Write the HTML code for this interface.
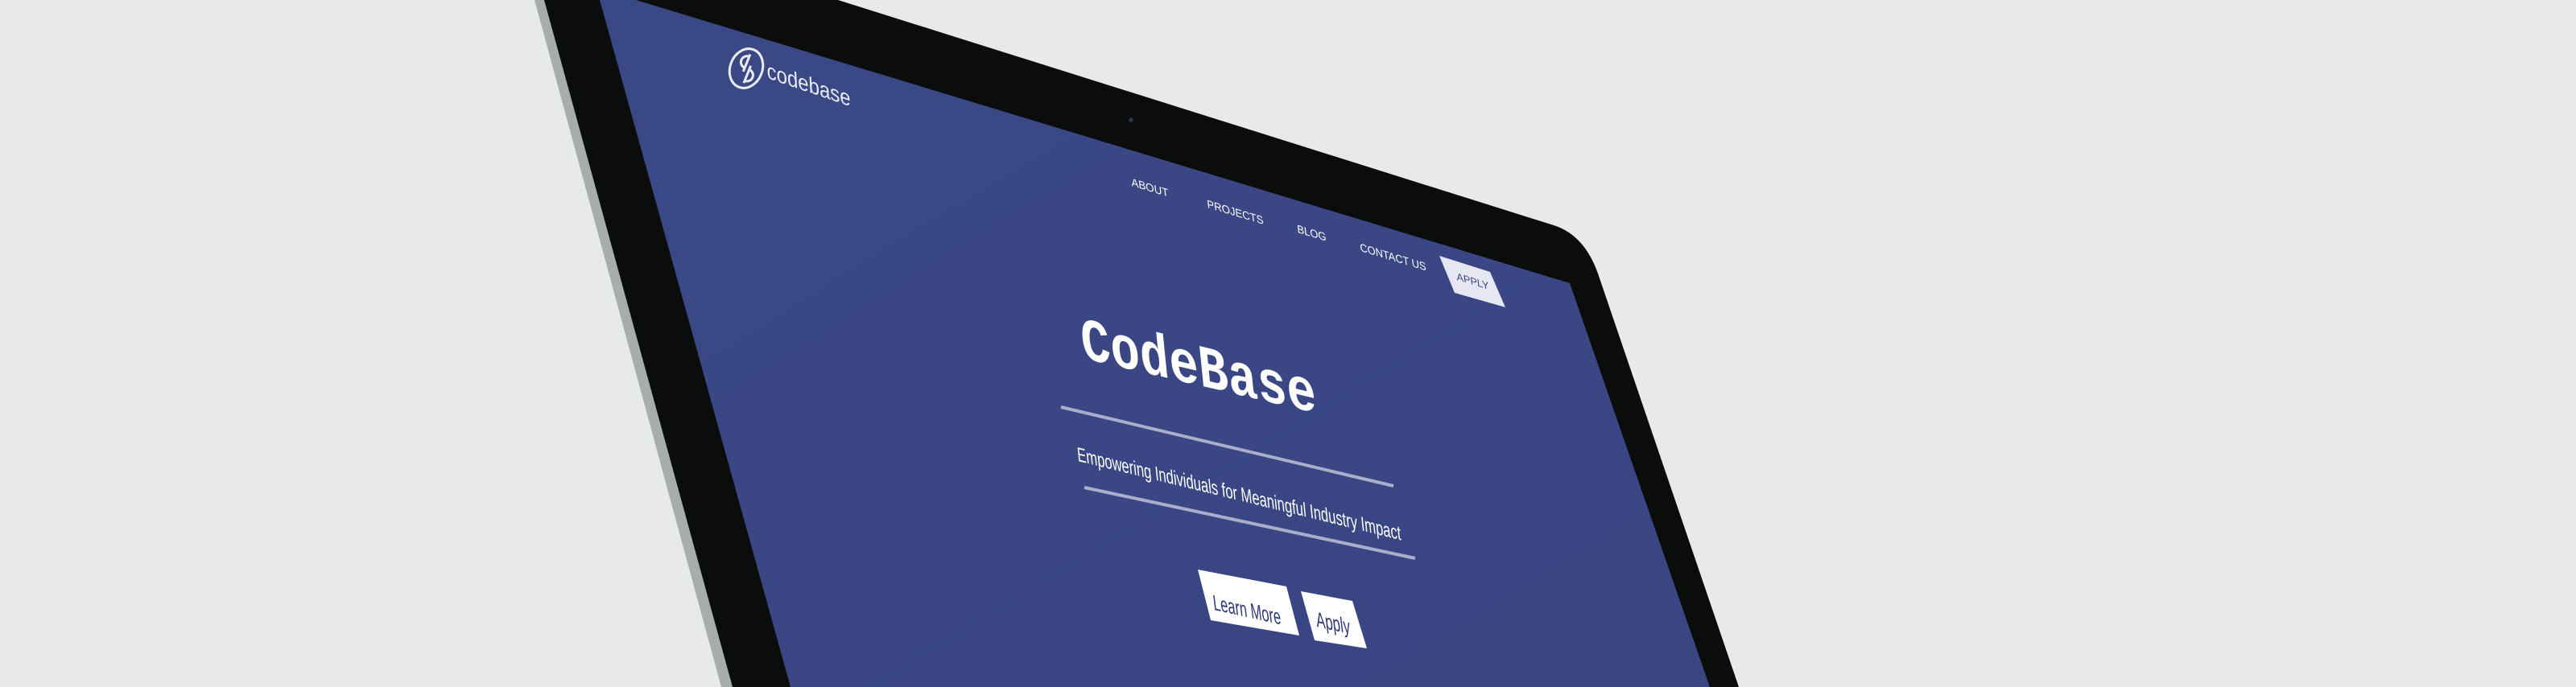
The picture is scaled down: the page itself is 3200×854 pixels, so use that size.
<!DOCTYPE html>
<html><head><meta charset="utf-8"><style>
html,body{margin:0;padding:0;background:#e8eae9;}
svg{display:block}
</style></head><body>
<svg width="3200" height="854" viewBox="0 0 3200 854" xmlns="http://www.w3.org/2000/svg">
<defs>
<linearGradient id="scr" x1="0" y1="0" x2="1" y2="1">
<stop offset="0" stop-color="#3a4886"/>
<stop offset="1" stop-color="#394682"/>
</linearGradient>
</defs>
<rect width="3200" height="854" fill="#e8eae9"/>
<polygon points="664,0 680,0 914,854 896,854" fill="#a7ada9"/>
<path d="M676,0 L1041,0 L1930,280 Q1968,292 1985,340 L2160,854 L910,854 Z" fill="#0b0c0c"/>
<polygon points="745,0 790,0 1950,352 2124,854 982,854" fill="url(#scr)"/>
<circle cx="1405" cy="149" r="3" fill="#2a3540"/>

<g transform="translate(927,85) rotate(22)" fill="none" stroke="#e8eaf4" stroke-width="3">
<ellipse cx="0" cy="0" rx="20" ry="25"/>
<path d="M-2,-15 A7,7 0 1 0 -2,0 M-2,-18 L-2,5"/>
<path d="M4,15 A7,7 0 1 0 4,0 M4,18 L4,-5"/>
</g>
<text transform="matrix(1,0.34,0.05,1,953,97)" font-family="Liberation Sans, sans-serif" font-size="28" fill="#e8eaf4" textLength="104" lengthAdjust="spacingAndGlyphs">codebase</text>

<g font-family="Liberation Sans, sans-serif" font-size="14" fill="#ffffff">
<text transform="matrix(1,0.3,0.12,1,1406,231)" textLength="46" lengthAdjust="spacingAndGlyphs">ABOUT</text>
<text transform="matrix(1,0.3,0.12,1,1500,258)" textLength="70" lengthAdjust="spacingAndGlyphs">PROJECTS</text>
<text transform="matrix(1,0.3,0.12,1,1612,289)" textLength="36" lengthAdjust="spacingAndGlyphs">BLOG</text>
<text transform="matrix(1,0.3,0.12,1,1690,312)" textLength="82" lengthAdjust="spacingAndGlyphs">CONTACT US</text>
</g>
<polygon points="1788,318 1851,338 1870,382 1807,364" fill="#e6e7f3"/>
<text transform="matrix(1,0.3,0.12,1,1810,348)" font-family="Liberation Sans, sans-serif" font-size="13" fill="#3a4580" textLength="40" lengthAdjust="spacingAndGlyphs">APPLY</text>

<text transform="matrix(1,0.235,0.1,1,1345,445)" font-family="Liberation Mono, monospace" font-weight="bold" font-size="76" fill="#ffffff" textLength="292" lengthAdjust="spacingAndGlyphs">CodeBase</text>

<line x1="1318" y1="506" x2="1731" y2="604" stroke="#a9aecb" stroke-width="4"/>
<line x1="1347" y1="606" x2="1758" y2="694" stroke="#a9aecb" stroke-width="4"/>

<text transform="matrix(1,0.245,0.1,1,1339,573)" font-family="Liberation Sans, sans-serif" font-size="25" fill="#ffffff" textLength="402" lengthAdjust="spacingAndGlyphs">Empowering Individuals for Meaningful Industry Impact</text>

<polygon points="1488,708 1598,729 1614,790 1504,771" fill="#ffffff"/>
<text transform="matrix(1,0.22,0.12,1,1508,758)" font-family="Liberation Sans, sans-serif" font-size="27" fill="#2c3678" textLength="84" lengthAdjust="spacingAndGlyphs">Learn More</text>
<polygon points="1616,735 1680,747 1698,806 1633,796" fill="#ffffff"/>
<text transform="matrix(1,0.22,0.12,1,1636,779)" font-family="Liberation Sans, sans-serif" font-size="27" fill="#2c3678" textLength="42" lengthAdjust="spacingAndGlyphs">Apply</text>
</svg>
</body></html>
